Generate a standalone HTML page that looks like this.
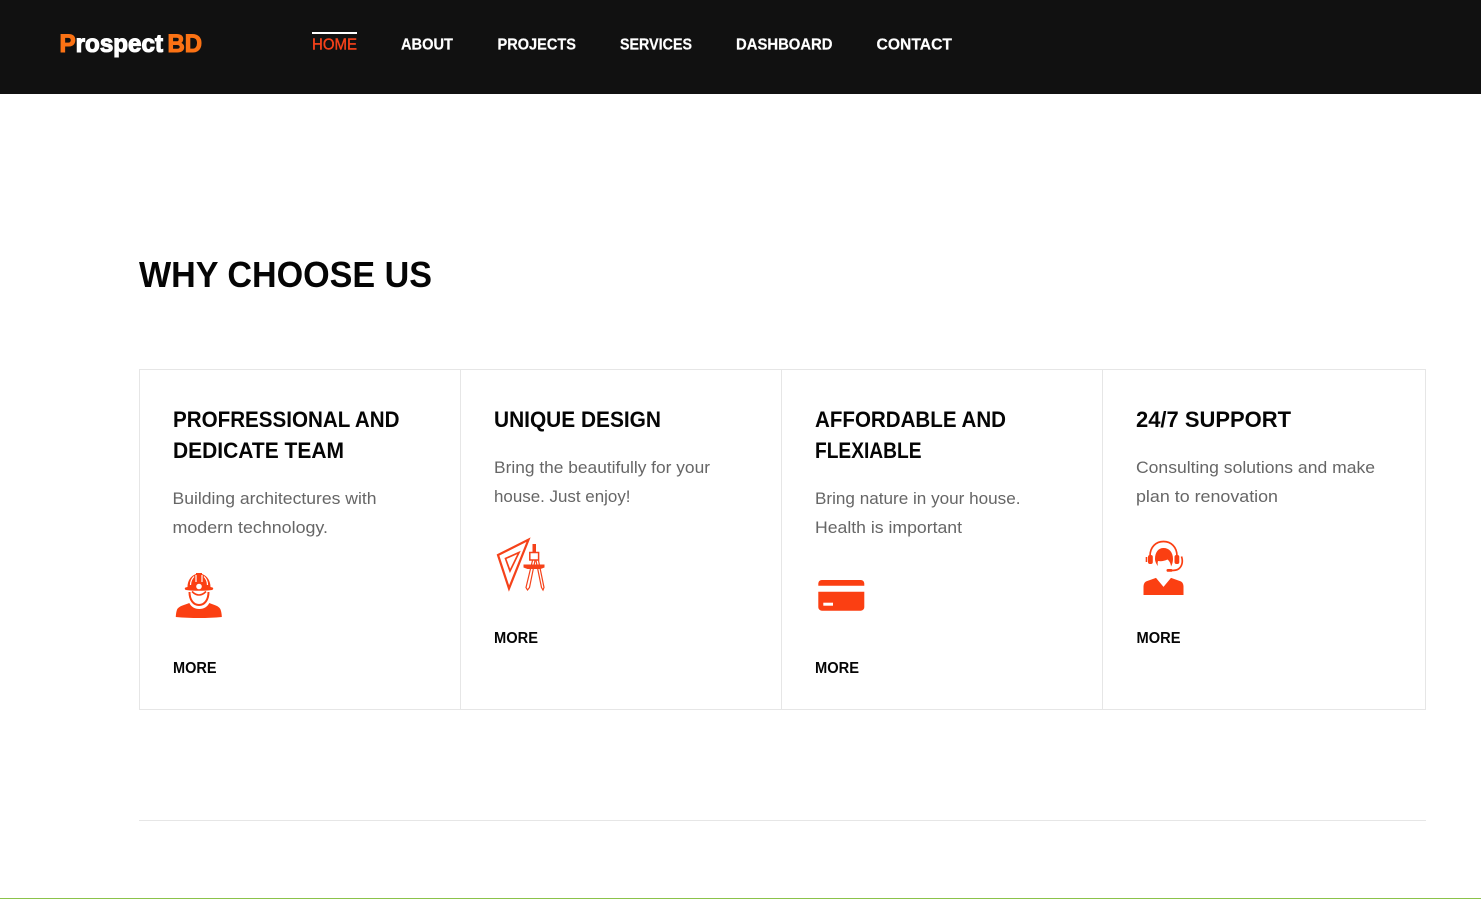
<!DOCTYPE html>
<html lang="en"><head><meta charset="utf-8"><title>Prospect BD</title>
<style>
html,body{margin:0;padding:0;background:#fff;width:1481px;height:899px;overflow:hidden}
svg{display:block}
text{font-family:"Liberation Sans",sans-serif}
.nav{font-size:16px;font-weight:700;fill:#fff;stroke:#fff;stroke-width:.2px}
.h{font-size:22.5px;font-weight:700;fill:#050505}
.p{font-size:16.500px;fill:#666}
.m{font-size:15.500px;font-weight:700;fill:#050505}
</style></head><body>
<svg width="1481" height="899" viewBox="0 0 1481 899" xmlns="http://www.w3.org/2000/svg">
<rect width="1481" height="94" fill="#111"/>
<text x="59.500" y="52" font-size="25" font-weight="700" stroke-width="1.100" textLength="103.500" lengthAdjust="spacingAndGlyphs" fill="#fff" stroke="#fff"><tspan fill="#fb7214" stroke="#fb7214">P</tspan>rospect</text>
<text x="167.500" y="52" font-size="25" font-weight="700" stroke-width="1.100" textLength="34.500" lengthAdjust="spacingAndGlyphs" fill="#fb7214" stroke="#fb7214">BD</text>
<rect x="312" y="32" width="45" height="2" fill="#fff"/>
<text class="nav" x="312" y="49.500" textLength="45" lengthAdjust="spacingAndGlyphs" style="fill:#f4411a;font-weight:400;stroke:#f4411a;stroke-width:.4px">HOME</text>
<text class="nav" x="401" y="49.500" textLength="52" lengthAdjust="spacingAndGlyphs">ABOUT</text>
<text class="nav" x="497.500" y="49.500" textLength="78.500" lengthAdjust="spacingAndGlyphs">PROJECTS</text>
<text class="nav" x="620" y="49.500" textLength="72" lengthAdjust="spacingAndGlyphs">SERVICES</text>
<text class="nav" x="736" y="49.500" textLength="96.500" lengthAdjust="spacingAndGlyphs">DASHBOARD</text>
<text class="nav" x="876.500" y="49.500" textLength="75.500" lengthAdjust="spacingAndGlyphs">CONTACT</text>

<text x="139" y="287" font-size="36.500" font-weight="700" fill="#050505" textLength="293" lengthAdjust="spacingAndGlyphs">WHY CHOOSE US</text>

<rect x="139.500" y="369.500" width="1286" height="340" fill="none" stroke="#e6e6e6"/>
<path d="M460.500 370V709M781.500 370V709M1102.500 370V709" stroke="#e6e6e6" fill="none"/>

<text class="h" x="173" y="427" textLength="226.500" lengthAdjust="spacingAndGlyphs">PROFRESSIONAL AND</text>
<text class="h" x="173" y="458" textLength="171" lengthAdjust="spacingAndGlyphs">DEDICATE TEAM</text>
<text class="p" x="172.500" y="504" textLength="204" lengthAdjust="spacingAndGlyphs">Building architectures with</text>
<text class="p" x="172.500" y="533" textLength="155.500" lengthAdjust="spacingAndGlyphs">modern technology.</text>
<text class="m" x="173" y="673" textLength="43.500" lengthAdjust="spacingAndGlyphs">MORE</text>

<text class="h" x="494" y="427" textLength="167" lengthAdjust="spacingAndGlyphs">UNIQUE DESIGN</text>
<text class="p" x="494" y="473" textLength="216" lengthAdjust="spacingAndGlyphs">Bring the beautifully for your</text>
<text class="p" x="494" y="502" textLength="136.500" lengthAdjust="spacingAndGlyphs">house. Just enjoy!</text>
<text class="m" x="494" y="643" textLength="44" lengthAdjust="spacingAndGlyphs">MORE</text>

<text class="h" x="815" y="427" textLength="191" lengthAdjust="spacingAndGlyphs">AFFORDABLE AND</text>
<text class="h" x="815" y="458" textLength="106.500" lengthAdjust="spacingAndGlyphs">FLEXIABLE</text>
<text class="p" x="815" y="504" textLength="205.500" lengthAdjust="spacingAndGlyphs">Bring nature in your house.</text>
<text class="p" x="815" y="533" textLength="147" lengthAdjust="spacingAndGlyphs">Health is important</text>
<text class="m" x="815" y="673" textLength="44" lengthAdjust="spacingAndGlyphs">MORE</text>

<text class="h" x="1136" y="427" textLength="155" lengthAdjust="spacingAndGlyphs">24/7 SUPPORT</text>
<text class="p" x="1136" y="473" textLength="239" lengthAdjust="spacingAndGlyphs">Consulting solutions and make</text>
<text class="p" x="1136" y="502" textLength="142" lengthAdjust="spacingAndGlyphs">plan to renovation</text>
<text class="m" x="1136.500" y="643" textLength="44" lengthAdjust="spacingAndGlyphs">MORE</text>

<!-- worker -->
<g fill="#fb3f12">
<path d="M186 590c-1.500-.5-1.500-2-.5-2.500l2-.5c0-6 3-11 8.500-13v-1h6v1c5.500 2 8.500 7 8.500 13l2 .5c1 .5 1 2-.5 2.500c-8 1-18 1-26 0z"/>
<path d="M175.800 617c0-2 .5-6 1.500-8c2-3 7-4 12-6c2 4 5.500 6 10 6s8-2 10-6c5 2 9.500 3 11 6c1 2 1.500 6 1.500 8c-8 .8-14.500 1-22.500 1s-15.500-.2-23.500-1z"/>
</g>
<g fill="none" stroke="#fff" stroke-width="1.200">
<path d="M196 575V582M202 575V582"/>
<path d="M190.500 585c0-3.500 1.500-6.500 3.500-8.500M207.500 585c0-3.500-1.500-6.500-3.500-8.500"/>
</g>
<circle cx="199" cy="586.500" r="2.800" fill="#fff"/>
<path d="M189.500 592c0 8 4 13 9.500 13s9.500-5 9.500-13" fill="none" stroke="#fb3f12" stroke-width="2"/>
<path d="M192 591.500c2 2 4.500 3.500 7 3.500s5-1.500 7-3.500" fill="none" stroke="#fb3f12" stroke-width="1.600"/>

<!-- tools -->
<g fill="none" stroke="#f5421a">
<path d="M498 555L528.500 539.700L509 588.500z" stroke-width="2.200" stroke-linejoin="miter"/>
<path d="M505.500 558.500L519 552.500L510 571z" stroke-width="1.700"/>
<rect x="529.800" y="552.500" width="8.800" height="7.500" stroke-width="1.500"/>
<path d="M532.500 560.500L526 587.500l1.500 2.500l2-2.500L535 560.500M536 560.500l5.500 27l1.500 2.500l1-2.500L538.500 560.500" stroke-width="1.200"/>
</g>
<g fill="#f5421a">
<rect x="532.500" y="544" width="3.500" height="8.500"/>
<path d="M523.500 564.500h21v3l-4 1.500h-13l-4-1.500z"/>
</g>

<!-- credit card -->
<g fill="#fb3f12">
<path d="M818.300 585.700v-2.200a3.500 3.500 0 0 1 3.500-3.500h39a3.500 3.500 0 0 1 3.500 3.500v2.200z"/>
<path d="M818.300 591.800h46v15.400a3.500 3.500 0 0 1-3.500 3.500h-39a3.500 3.500 0 0 1-3.500-3.500z"/>
</g>
<rect x="823.300" y="602.700" width="9.700" height="3" fill="#fff"/>

<!-- support -->
<g fill="#fb3f12">
<path d="M1143.500 587c0-3 1-5 3-5.800l9.500-3.300l7.500 9l7.500-9l9.500 3.300c2 .8 3 2.800 3 5.800v8h-40z"/>
<path d="M1155 559c0-7 3.500-11 8.500-11c5.500 0 9.500 4 9.500 11c0 3-.8 5.500-2 7.500c0-2.500-1.500-5.500-3.500-7c-3 1.500-6.500 2-9.500 1.500c-.5 1.500-.5 3.500 0 5c-1.500-1.500-3-4.500-3-7z"/>
<rect x="1148" y="555" width="4.800" height="9" rx="2"/>
<rect x="1174.500" y="555" width="4.800" height="9" rx="2"/>
<rect x="1166.500" y="569" width="6" height="2.800" rx="1.400"/>
</g>
<g fill="none" stroke="#fb3f12" stroke-width="1.700">
<path d="M1150 556c0-9 6-14.500 13.500-14.500s13.500 5.500 13.500 14.500"/>
<path d="M1181.500 556.500c1.800 5 .5 10-3 12.500c-2 1.300-4.500 1.500-7 1.500"/>
<path d="M1146.500 557v5" stroke-width="1.600"/>
</g>

<rect x="139" y="820" width="1287" height="1" fill="#e6e6e6"/>
<rect x="0" y="898" width="1481" height="1" fill="#8bc34a"/>
</svg>
</body></html>
